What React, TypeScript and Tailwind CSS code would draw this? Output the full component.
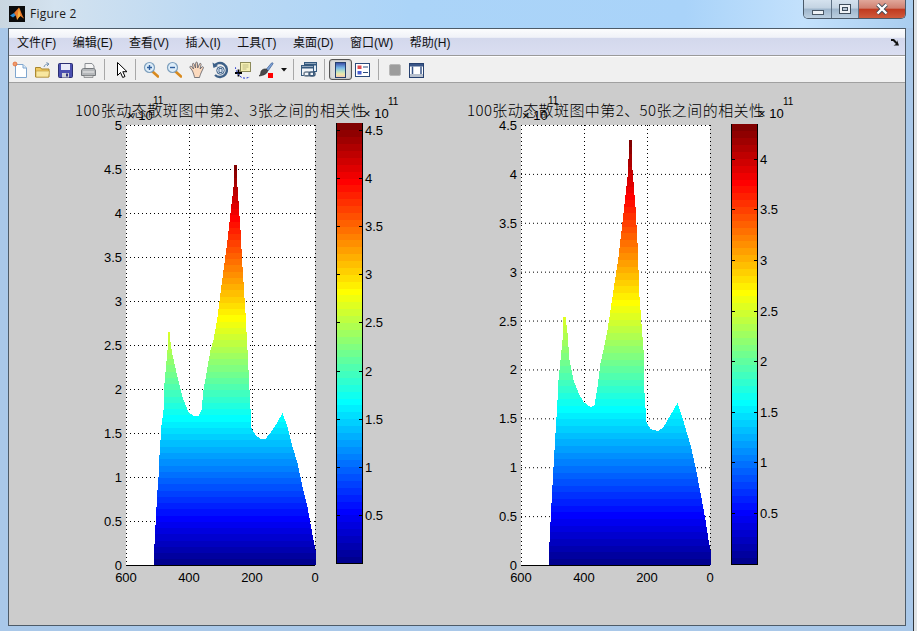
import type { ReactNode } from "react";

const AXIS_FONT = '"Liberation Sans", Arial, sans-serif';
const CJK_FONT = '"Noto Sans CJK SC", "Liberation Sans", sans-serif';
const MENU_FONT = '"Liberation Sans", "Noto Sans CJK SC", sans-serif';

function jet(i: number, n = 64) {
  const x = (i + 1) / n;
  const c = (v: number) => Math.round(Math.max(0, Math.min(1, v)) * 255);
  const r = c(Math.min(4 * x - 1.5, -4 * x + 4.5));
  const g = c(Math.min(4 * x - 0.5, -4 * x + 3.5));
  const b = c(Math.min(4 * x + 0.5, -4 * x + 2.5));
  return `rgb(${r},${g},${b})`;
}

const LEFT_SHAPE: [number, number][] = [
  [154, 544], [155, 525], [156, 507], [157, 490], [158, 477], [159, 455], [160, 440], [161, 425], [163, 410], [164, 383], [167, 350], [168, 332], [169, 332],
  [170, 342], [172, 355], [177, 377], [182, 397], [188, 412], [193, 416], [198, 416], [201, 410], [203, 390], [207, 367], [210, 350], [213, 340], [217, 317],
  [220, 293], [223, 270], [227, 240], [230, 213], [233, 187], [234, 164], [236, 164], [237, 187], [240, 230], [242, 267], [245, 313], [247, 350], [249, 390],
  [251, 428], [255, 435], [260, 439], [265, 439], [272, 430], [277, 422], [282, 413], [287, 427], [292, 447], [297, 463], [302, 487], [307, 507], [312, 535], [316, 555],
];

const RIGHT_SHAPE: [number, number][] = [
  [549, 542], [550, 522], [551, 503], [553, 467], [555, 433], [557, 400], [558, 380], [561, 350], [562, 340], [563, 317], [565, 317], [567, 333], [569, 360],
  [573, 380], [578, 393], [583, 402], [590, 407], [594, 405], [597, 387], [600, 363], [603, 350], [607, 330], [613, 290], [618, 257], [623, 213], [627, 177],
  [629, 140], [631, 140], [632, 170], [635, 207], [637, 243], [639, 297], [642, 337], [643, 350], [644, 393], [646, 422], [650, 429], [658, 431], [663, 427],
  [670, 415], [677, 403], [682, 418], [690, 445], [695, 467], [700, 493], [705, 520], [708, 540], [711, 555],
];

// the plot is a coarse surface, so its outline is stepped, not a smooth line
function stairs(pts: [number, number][], bottom: number) {
  const out: string[] = [`${pts[0][0]},${bottom}`];
  let seg = 0;
  for (let x = pts[0][0]; x < pts[pts.length - 1][0]; x += 1) {
    while (seg < pts.length - 2 && pts[seg + 1][0] <= x) seg++;
    const [x0, y0] = pts[seg];
    const [x1, y1] = pts[seg + 1];
    const y = Math.round(y0 + ((x - x0) / (x1 - x0)) * (y1 - y0));
    out.push(`${x},${y}`, `${x + 1},${y}`);
  }
  out.push(`${pts[pts.length - 1][0]},${bottom}`);
  return out.join(" ");
}

type PlotProps = {
  id: string;
  viewX: number;
  axX: number;
  axR: number;
  yMax: number;
  yTicks: string[];
  xGrid: number[];
  shape: [number, number][];
  peak: number;
  title: string;
  titleX: number;
  titleW: number;
  expX: number;
  barX: number;
  barTop: number;
  barBottom: number;
  barTicks: [string, number][];
  barExpX: number;
};

function Plot(p: PlotProps) {
  const top = 125;
  const bottom = 565;
  const unit = (bottom - top) / p.yMax;
  // surface bands run from 0 up to the peak value, same 64 colours as the bar
  const bandH = (p.peak * unit) / 64;
  const barH = (p.barBottom - p.barTop) / 64;
  const gridLine = { stroke: "#000", strokeWidth: 1, strokeDasharray: "1 3" };

  return (
    <svg width={394} height={543} viewBox={`${p.viewX} 83 394 543`} className="shrink-0">
      <rect x={p.axX} y={top} width={p.axR - p.axX} height={bottom - top} fill="#fff" />
      {p.yTicks.map((_, i) => (
        <line key={i} x1={p.axX} x2={p.axR} y1={bottom - i * 0.5 * unit + 0.5} y2={bottom - i * 0.5 * unit + 0.5} {...gridLine} />
      ))}
      <line x1={p.axX + 0.5} x2={p.axX + 0.5} y1={top} y2={bottom} {...gridLine} />
      <line x1={p.axR + 0.5} x2={p.axR + 0.5} y1={top} y2={bottom} {...gridLine} />
      {p.xGrid.map((x) => (
        <line key={x} x1={x + 0.5} x2={x + 0.5} y1={top} y2={bottom} {...gridLine} />
      ))}
      <defs>
        <clipPath id={p.id}>
          <polygon points={stairs(p.shape, bottom)} shapeRendering="crispEdges" />
        </clipPath>
      </defs>
      <g clipPath={`url(#${p.id})`} shapeRendering="crispEdges">
        {Array.from({ length: 64 }, (_, i) => (
          <rect key={i} x={p.axX} y={bottom - (i + 1) * bandH} width={p.axR - p.axX + 4} height={bandH + 0.6} fill={jet(i)} />
        ))}
      </g>
      <line x1={p.axX} x2={p.axR} y1={bottom + 0.5} y2={bottom + 0.5} stroke="#000" />
      <g fontFamily={AXIS_FONT} fontSize={13} fill="#000">
        {p.yTicks.map((t, i) => (
          <text key={t} x={p.axX - 4} y={bottom - i * 0.5 * unit + 5} textAnchor="end">
            {t}
          </text>
        ))}
        {["600", "400", "200", "0"].map((t, i) => (
          <text key={t} x={p.axX + ((p.axR - p.axX) / 3) * i} y={582} textAnchor="middle">
            {t}
          </text>
        ))}
        <text x={p.expX} y={120}>× 10</text>
        <text x={p.expX + 26} y={104} fontSize={10}>11</text>
        <text x={p.barExpX} y={118}>× 10</text>
        <text x={p.barExpX + 25} y={105} fontSize={10}>11</text>
        {p.barTicks.map(([t, y]) => (
          <text key={t} x={p.barX + 29} y={y + 5}>
            {t}
          </text>
        ))}
      </g>
      <text x={p.titleX} y={116} textLength={p.titleW} fontFamily={CJK_FONT} fontSize={15} fontWeight={300} fill="#000">
        {p.title}
      </text>
      <g shapeRendering="crispEdges">
        {Array.from({ length: 64 }, (_, i) => (
          <rect key={i} x={p.barX} y={p.barBottom - (i + 1) * barH} width={26} height={barH + 0.6} fill={jet(i)} />
        ))}
        <path
          d={`M${p.barX + 0.5} ${p.barTop}V${p.barBottom + 0.5}H${p.barX + 26.5}V${p.barTop}`}
          fill="none"
          stroke="#000"
        />
        {p.barTicks.map(([t, y]) => (
          <path key={t} d={`M${p.barX} ${y + 0.5}h4M${p.barX + 23} ${y + 0.5}h4`} stroke="#000" />
        ))}
      </g>
    </svg>
  );
}

function MatlabLogo() {
  return (
    <svg width={16} height={16} viewBox="0 0 16 16" className="mt-[6px] ml-[9px] shrink-0">
      <rect width={16} height={16} fill="#0b0b0b" />
      <path d="M1 9.500 5 7l2 2-3 2.500z" fill="#2f8fd6" />
      <path d="M5 7 10 1.500c1.500 2.500 3 7.500 5 11-1.500-.8-2.500-1.500-3.500-2.500-1.500 1-2.500 2.500-3.500 4C7.500 11.500 7 9.500 5 7z" fill="#e8792b" />
      <path d="M10 1.500c-.5 3-1 6-2 12.500 1-1.500 2-3 3.500-4z" fill="#f6b13c" />
    </svg>
  );
}

function Ico({ children, w = 16 }: { children: ReactNode; w?: number }) {
  return (
    <svg width={w} height={18} viewBox={`0 0 ${w} 18`}>
      {children}
    </svg>
  );
}

function Slot({ children }: { children: ReactNode }) {
  return <div className="w-[23px] shrink-0 flex items-center">{children}</div>;
}

function Sep({ className }: { className: string }) {
  return <div className={`w-px h-[21px] bg-[#a8a8a8] shrink-0 ${className}`} />;
}

function Magnifier({ minus }: { minus?: boolean }) {
  return (
    <Ico>
      <path d="M9.500 10.500 15 15.500" stroke="#d98a1e" strokeWidth={2.600} strokeLinecap="round" />
      <circle cx={6.500} cy={6.500} r={5} fill="#dcecf8" stroke="#7d9fbd" strokeWidth={1.200} />
      <path d={minus ? "M4 6.500h5" : "M4 6.500h5M6.500 4v5"} stroke="#2f5f9e" strokeWidth={1.400} />
    </Ico>
  );
}

function Toolbar() {
  return (
    <div className="h-[26px] shrink-0 flex items-center pl-[3px] bg-[#f0f0f0] border-t border-white">
      <Slot>
        <Ico>
          <path d="M3.500 3.500H11l3.500 3.500v9.500h-11z" fill="#fff" stroke="#7fa6cf" />
          <path d="M11 3.500V7h3.500" fill="#dbe9f6" stroke="#7fa6cf" />
          <circle cx={3} cy={3} r={2} fill="#ef9a6b" stroke="#e2662c" strokeWidth={0.700} />
        </Ico>
      </Slot>
      <Slot>
        <Ico>
          <path d="M.500 6.500h5l1 1.500h7.500v8H.500z" fill="#efc860" stroke="#a8862e" />
          <path d="M1 10h13.500l-1 6H1z" fill="#f8e7a0" stroke="#b8963a" strokeWidth={0.600} />
          <path d="M9 6c.5-2 2-3 4-3M11.500 1.500 14 3l-2 2" fill="none" stroke="#6f8fb0" />
        </Ico>
      </Slot>
      <Slot>
        <Ico>
          <rect x={0.500} y={2.500} width={14} height={14} rx={1} fill="#4a4fb0" stroke="#2b2f72" />
          <rect x={3} y={3} width={9} height={6} fill="#e8eaf8" />
          <rect x={4} y={12} width={7} height={4.500} fill="#d0d3d8" />
          <rect x={8} y={12.500} width={2} height={3} fill="#30347c" />
        </Ico>
      </Slot>
      <Slot>
        <Ico>
          <path d="M4 8V2.500h7L13 5v3z" fill="#f4f4f4" stroke="#8b8f94" />
          <path d="M.500 10c0-1.500 1-2.500 2-2.500h10c1 0 2 1 2 2.500v4.500H.500z" fill="#b4b7ba" stroke="#75797d" />
          <path d="M3 14.500h9v2H3z" fill="#d8d8d8" stroke="#7a7d80" strokeWidth={0.700} />
          <path d="M2 11h11" stroke="#eee" />
        </Ico>
      </Slot>
      <Sep className="" />
      <div className="w-[30px] shrink-0 flex items-center pl-[11px]">
        <Ico w={12}>
          <path d="M1.500 1.500v13l3-3 2.200 5 2.300-1-2.200-4.800h4.200z" fill="#fff" stroke="#000" strokeLinejoin="round" />
        </Ico>
      </div>
      <Sep className="mr-[7px]" />
      <Slot><Magnifier /></Slot>
      <Slot><Magnifier minus /></Slot>
      <Slot>
        <Ico>
          <path d="M3.500 10 1 6.500c-.5-1 .8-1.800 1.600-1L4.500 8 3.500 3.500c-.3-1.200 1.300-1.600 1.600-.5L6.500 7l.2-5c0-1.200 1.700-1.200 1.700 0l.3 5L10.500 3c.3-1.100 1.800-.7 1.600.5l-1 4.500 1.800-2c.8-.8 2 .1 1.400 1.100L12 12c-.6 1.800-1.500 4-1.500 4.500h-5c0-1-1-4-2-6.500z" fill="#fbd9bd" stroke="#5b5a63" strokeWidth={0.800} />
        </Ico>
      </Slot>
      <Slot>
        <Ico>
          <path d="M1.800 5.500A7 7 0 1 1 3 14" fill="none" stroke="#3d6088" strokeWidth={2.400} />
          <path d="M.500 1.500 1.500 7l4.500-2z" fill="#3d6088" />
          <circle cx={8.500} cy={9.500} r={3.800} fill="#dfe8f2" stroke="#3d6088" />
          <path d="M7 7.500v4M7 7.500h3v4H7" fill="none" stroke="#3d6088" strokeWidth={0.900} />
        </Ico>
      </Slot>
      <Slot>
        <Ico>
          <rect x={5.500} y={1.500} width={10} height={9} fill="#f5efb4" stroke="#8d8a5a" />
          <path d="M7.500 4h6M7.500 6h6M7.500 8h4" stroke="#b0ad78" strokeWidth={0.800} />
          <path d="M0 12h7M3.500 8.500v7" stroke="#000" strokeWidth={1.800} />
          <path d="M0 6c1.500 4 3 8 6 10s6 1 9 0" fill="none" stroke="#2436d0" strokeDasharray="2 1.500" />
        </Ico>
      </Slot>
      <Slot>
        <Ico>
          <path d="M8 8.500 13.500 2c.8-.9 2 .2 1.400 1L10 10z" fill="#7ea3d8" stroke="#3d5f92" strokeWidth={0.700} />
          <path d="M6.500 8c2-.5 3.500 1 3 2.500-.5 2-3.500 4-8.500 4.500 2-1.500 1.500-3 2-4.500.5-1.500 2-2.200 3.500-2.500z" fill="#4a4a4c" stroke="#222" strokeWidth={0.600} />
          <rect x={10} y={12} width={5} height={5} fill="#f00" />
        </Ico>
      </Slot>
      <div className="w-[12px] shrink-0 flex items-center">
        <svg width={6} height={4} viewBox="0 0 6 4">
          <path d="M0 0h6L3 3.500z" fill="#111" />
        </svg>
      </div>
      <Sep className="mr-[7px]" />
      <Slot>
        <Ico>
          <rect x={3.500} y={1.500} width={12} height={9} fill="#e5edf5" stroke="#35597e" />
          <path d="M3.500 3.500h12" stroke="#35597e" strokeWidth={2} />
          <rect x={0.500} y={4.500} width={12} height={10} fill="#f3f6fa" stroke="#35597e" />
          <path d="M.500 6.500h12" stroke="#35597e" strokeWidth={2} />
          <rect x={3} y={11} width={6} height={4} rx={2} fill="none" stroke="#6f7f90" strokeWidth={1.400} />
          <rect x={8} y={11} width={6} height={4} rx={2} fill="none" stroke="#3e5a78" strokeWidth={1.400} />
        </Ico>
      </Slot>
      <Sep className="mr-[4px]" />
      <div className="w-[23px] h-[21px] shrink-0 flex items-center justify-center rounded-[3px] border border-[#555] bg-[#dcdcdc] shadow-[inset_0_0_2px_#999]">
        <div className="w-[11px] h-[16px] border border-[#26406e] bg-[linear-gradient(180deg,#3a4fa8_0%,#79b8e8_35%,#b8e0c8_60%,#f0e8a8_80%,#f0c8b8_100%)]" />
      </div>
      <div className="w-[26px] shrink-0 flex items-center pl-[3px]">
        <Ico>
          <rect x={0.500} y={2.500} width={14} height={13} fill="#fff" stroke="#2b4a7a" />
          <rect x={2.500} y={4.500} width={4} height={3.500} fill="#e04a50" />
          <rect x={2.500} y={10} width={4} height={3.500} fill="#4a5fd0" />
          <path d="M8 6h5M8 11.500h5" stroke="#2b4a7a" />
        </Ico>
      </div>
      <Sep className="mr-[10px]" />
      <div className="w-[20px] shrink-0 flex items-center">
        <Ico w={12}>
          <rect x={0.500} y={3.500} width={11} height={11} rx={1.500} fill="#9c9c9c" stroke="#b8b8b8" />
        </Ico>
      </div>
      <Slot>
        <Ico>
          <rect x={0.500} y={2.500} width={14} height={14} fill="#fff" stroke="#26406e" />
          <rect x={1} y={3} width={13} height={2.500} fill="#3a5688" />
          <rect x={1} y={13} width={13} height={3} fill="#b8c0cc" />
          <path d="M3.500 5.500V13M12 5.500V13" stroke="#3a5688" strokeWidth={1.500} />
        </Ico>
      </Slot>
    </div>
  );
}

const MENUS = ["文件(F)", "编辑(E)", "查看(V)", "插入(I)", "工具(T)", "桌面(D)", "窗口(W)", "帮助(H)"];

export default function App() {
  return (
    <div className="w-[917px] h-[631px] overflow-hidden bg-[#dfe3e6]">
      <div className="w-[914px] h-[631px] flex flex-col border-r border-[#30363c] bg-[#a9c8e9]">
        <div className="h-[28px] shrink-0 flex justify-between items-start bg-[linear-gradient(90deg,#c9d6e0_0%,#d3e2ef_6%,#bcd9f3_22%,#abd4f8_45%,#a9d3f9_75%,#c3e1fc_88%,#a9cdef_100%)]">
          <div className="flex items-start">
            <MatlabLogo />
            <span className="ml-[5px] mt-[6px] text-[12px] leading-[16px] tracking-[0.25px] text-[#1c1c1c] font-['Open_Sans','Noto_Sans',sans-serif]">Figure 2</span>
          </div>
          <div className="flex h-[19px] mr-[7px] rounded-b-[5px] border border-t-0 border-[#4a5a6a] overflow-hidden shrink-0">
            <div className="w-[28px] flex items-center justify-center bg-[linear-gradient(180deg,#d5e2ee_0%,#c3d3e2_45%,#9db5cb_50%,#bccfe0_100%)] border-r border-[#5f7286]">
              <div className="w-[12px] h-[5px] mt-[6px] bg-[#eef2f6] border border-[#4a5866]" />
            </div>
            <div className="w-[27px] flex items-center justify-center bg-[linear-gradient(180deg,#d5e2ee_0%,#c3d3e2_45%,#9db5cb_50%,#bccfe0_100%)] border-r border-[#5f7286]">
              <div className="w-[12px] h-[10px] border border-[#3f4d5b] bg-[#eef2f6] flex items-center justify-center">
                <div className="w-[6px] h-[4px] border border-[#3f4d5b] bg-[#b8c6d4]" />
              </div>
            </div>
            <div className="w-[46px] flex items-center justify-center bg-[linear-gradient(180deg,#e0a79a_0%,#d08070_45%,#c03a20_52%,#cf5a3c_100%)]">
              <svg width={14} height={12} viewBox="0 0 14 12">
                <path d="M2.500 1.500 11.500 10.500M11.500 1.500 2.500 10.500" stroke="#3f4c5a" strokeWidth={4} />
                <path d="M2.500 1.500 11.500 10.500M11.500 1.500 2.500 10.500" stroke="#fff" strokeWidth={2.400} />
              </svg>
            </div>
          </div>
        </div>

        <div className="ml-[8px] mr-[7px] h-[598px] shrink-0 flex flex-col border border-[#4d5b68]">
          <div className="h-[27px] shrink-0 flex items-center justify-between pl-[8px] pr-[5px] border-b border-[#9a9a9a] bg-[linear-gradient(180deg,#fbfcfd_0%,#f0f2f8_32%,#d3d8ec_36%,#dadef1_100%)]">
            <div className="flex gap-[16.4px] pt-[1px] text-[12px] text-[#111]" style={{ fontFamily: MENU_FONT }}>
              {MENUS.map((m) => (
                <span key={m}>{m}</span>
              ))}
            </div>
            <svg width={9} height={8} viewBox="0 0 9 8">
              <path d="M0 1h3l3 3V2l2 5.500H2.500L5 6 2 3H0z" fill="#111" />
            </svg>
          </div>
          <Toolbar />
          <div className="flex-1 flex bg-[#cccccc] border-t border-[#a0a0a0] overflow-hidden">
            <Plot
              id="left"
              viewX={9}
              axX={126}
              axR={315}
              yMax={5}
              yTicks={["0", "0.5", "1", "1.5", "2", "2.5", "3", "3.5", "4", "4.5", "5"]}
              xGrid={[189, 252]}
              shape={LEFT_SHAPE}
              peak={4.55}
              title="100张动态散斑图中第2、3张之间的相关性"
              titleX={75}
              titleW={291}
              expX={127}
              barX={336}
              barTop={123}
              barBottom={563}
              barTicks={[["4.5", 130], ["4", 178], ["3.5", 226], ["3", 274], ["2.5", 322], ["2", 371], ["1.5", 419], ["1", 467], ["0.5", 515]]}
              barExpX={363}
            />
            <Plot
              id="right"
              viewX={403}
              axX={521}
              axR={710}
              yMax={4.5}
              yTicks={["0", "0.5", "1", "1.5", "2", "2.5", "3", "3.5", "4", "4.5"]}
              xGrid={[584, 647]}
              shape={RIGHT_SHAPE}
              peak={4.35}
              title="100张动态散斑图中第2、50张之间的相关性"
              titleX={467}
              titleW={297}
              expX={522}
              barX={731}
              barTop={124}
              barBottom={564}
              barTicks={[["4", 159], ["3.5", 209], ["3", 260], ["2.5", 311], ["2", 361], ["1.5", 412], ["1", 462], ["0.5", 513]]}
              barExpX={758}
            />
          </div>
        </div>
      </div>
    </div>
  );
}
